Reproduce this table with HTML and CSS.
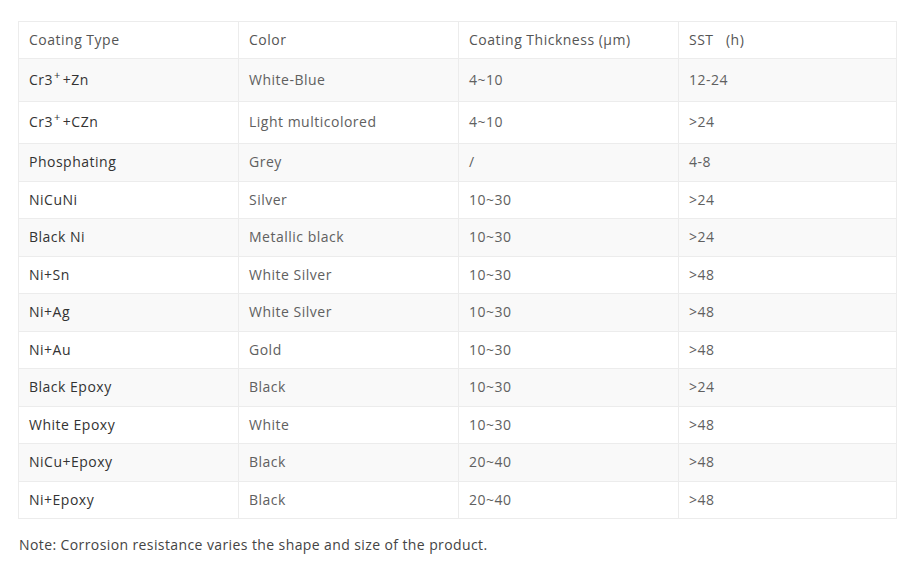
FILE: index.html
```html
<!DOCTYPE html>
<html lang="en">
<head>
<meta charset="utf-8">
<title>Coating Table</title>
<link rel="stylesheet" href="styles.css">
</head>
<body>
<div class="page">
  <table class="spec">
    <colgroup><col class="c1"><col class="c2"><col class="c3"><col class="c4"></colgroup>
    <tbody>
      <tr class="head"><td>Coating Type</td><td>Color</td><td>Coating Thickness (μm)</td><td>SST&nbsp;&nbsp;&nbsp;(h)</td></tr>
      <tr class="tall"><td>Cr3<sup>+</sup>+Zn</td><td>White-Blue</td><td>4~10</td><td>12-24</td></tr>
      <tr class="tall"><td>Cr3<sup>+</sup>+CZn</td><td>Light multicolored</td><td>4~10</td><td>&gt;24</td></tr>
      <tr><td>Phosphating</td><td>Grey</td><td>/</td><td>4-8</td></tr>
      <tr><td>NiCuNi</td><td>Silver</td><td>10~30</td><td>&gt;24</td></tr>
      <tr><td>Black Ni</td><td>Metallic black</td><td>10~30</td><td>&gt;24</td></tr>
      <tr><td>Ni+Sn</td><td>White Silver</td><td>10~30</td><td>&gt;48</td></tr>
      <tr><td>Ni+Ag</td><td>White Silver</td><td>10~30</td><td>&gt;48</td></tr>
      <tr><td>Ni+Au</td><td>Gold</td><td>10~30</td><td>&gt;48</td></tr>
      <tr><td>Black Epoxy</td><td>Black</td><td>10~30</td><td>&gt;24</td></tr>
      <tr><td>White Epoxy</td><td>White</td><td>10~30</td><td>&gt;48</td></tr>
      <tr><td>NiCu+Epoxy</td><td>Black</td><td>20~40</td><td>&gt;48</td></tr>
      <tr><td>Ni+Epoxy</td><td>Black</td><td>20~40</td><td>&gt;48</td></tr>
    </tbody>
  </table>
  <p class="note">Note: Corrosion resistance varies the shape and size of the product.</p>
</div>
</body>
</html>
```
FILE: styles.css
```css
html, body {
  margin: 0;
  padding: 0;
  background: #fff;
}
body {
  font-family: "Open Sans", "Liberation Sans", sans-serif;
  font-size: 14px;
  color: #555;
}
.page {
  padding: 21px 16px 0 18px;
}
.spec {
  width: 878px;
  table-layout: fixed;
  border-collapse: collapse;
  border: 1px solid #ececec;
}
.spec .c1, .spec .c2, .spec .c3 {
  width: 220px;
}
.spec .c4 {
  width: 218px;
}
.spec td {
  border: 1px solid #ececec;
  padding: 8px 10px 8px 10px;
  height: 20.5px;
  line-height: 20px;
  vertical-align: middle;
  color: #606060;
  white-space: nowrap;
  letter-spacing: 0.5px;
}
.spec td:first-child {
  color: #333;
}
.spec tr:nth-child(even) td {
  background: #f9f9f9;
}
.spec tr.head td {
  height: 20px;
  color: #555;
}
.spec tr.tall td {
  height: 25.5px;
}
.spec sup {
  font-size: 11px;
  line-height: 0;
  vertical-align: 6px;
  margin: 0 2px 0 1px;
}
.note {
  margin: 16px 0 0 1px;
  font-size: 14px;
  line-height: 20px;
  color: #444;
  letter-spacing: 0.4px;
}
```
